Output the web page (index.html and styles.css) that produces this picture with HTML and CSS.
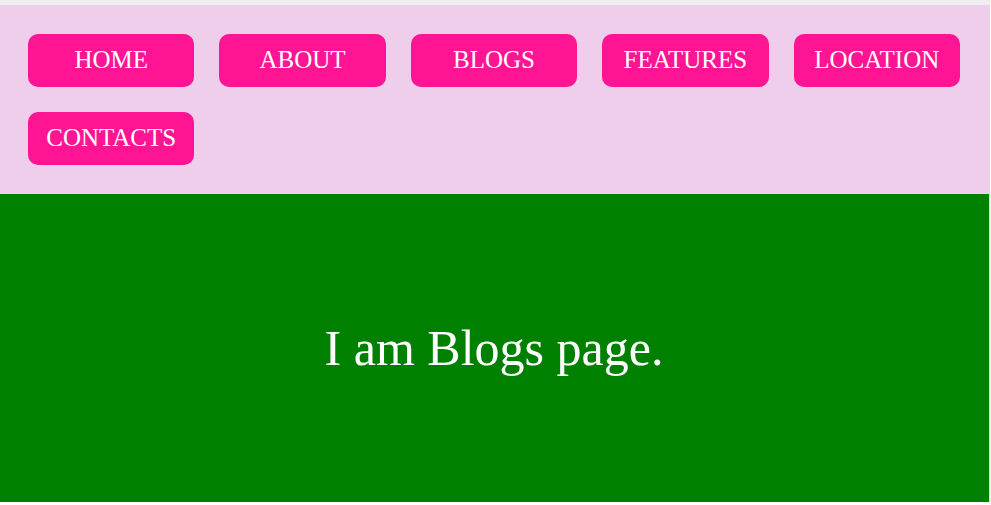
FILE: index.html
```html
<!DOCTYPE html>
<html>
<head>
<meta charset="utf-8">
<link rel="stylesheet" href="styles.css">
</head>
<body>
<div class="topstrip"></div>
<div class="page">
  <nav class="nav">
    <a class="btn" href="#">HOME</a>
    <a class="btn" href="#">ABOUT</a>
    <a class="btn" href="#">BLOGS</a>
    <a class="btn" href="#">FEATURES</a>
    <a class="btn" href="#">LOCATION</a>
    <a class="btn" href="#">CONTACTS</a>
  </nav>
  <main class="content">
    <p class="msg">I am Blogs page.</p>
  </main>
</div>
</body>
</html>
```
FILE: styles.css
```css
html, body {
  margin: 0;
  padding: 0;
  background: #ffffff;
  font-family: "Liberation Serif", "Times New Roman", serif;
}
.topstrip {
  height: 5px;
  background: #efefef;
}
.page {
  width: 989px;
  border-right: 1px solid #dcdcdc;
}
.nav {
  background: #efceec;
  display: flex;
  flex-wrap: wrap;
  gap: 25px 25px;
  padding: 29px 28px;
}
.btn {
  box-sizing: border-box;
  width: 166.4px;
  height: 53px;
  padding-bottom: 2px;
  background: #ff1493;
  border-radius: 10px;
  color: #ffffff;
  text-decoration: none;
  font-size: 25px;
  display: flex;
  align-items: center;
  justify-content: center;
}
.content {
  background: #008000;
  height: 308px;
  display: flex;
  align-items: center;
  justify-content: center;
}
.msg {
  margin: 0 0 0 -1px;
  color: #ffffff;
  font-size: 50px;
}
```
